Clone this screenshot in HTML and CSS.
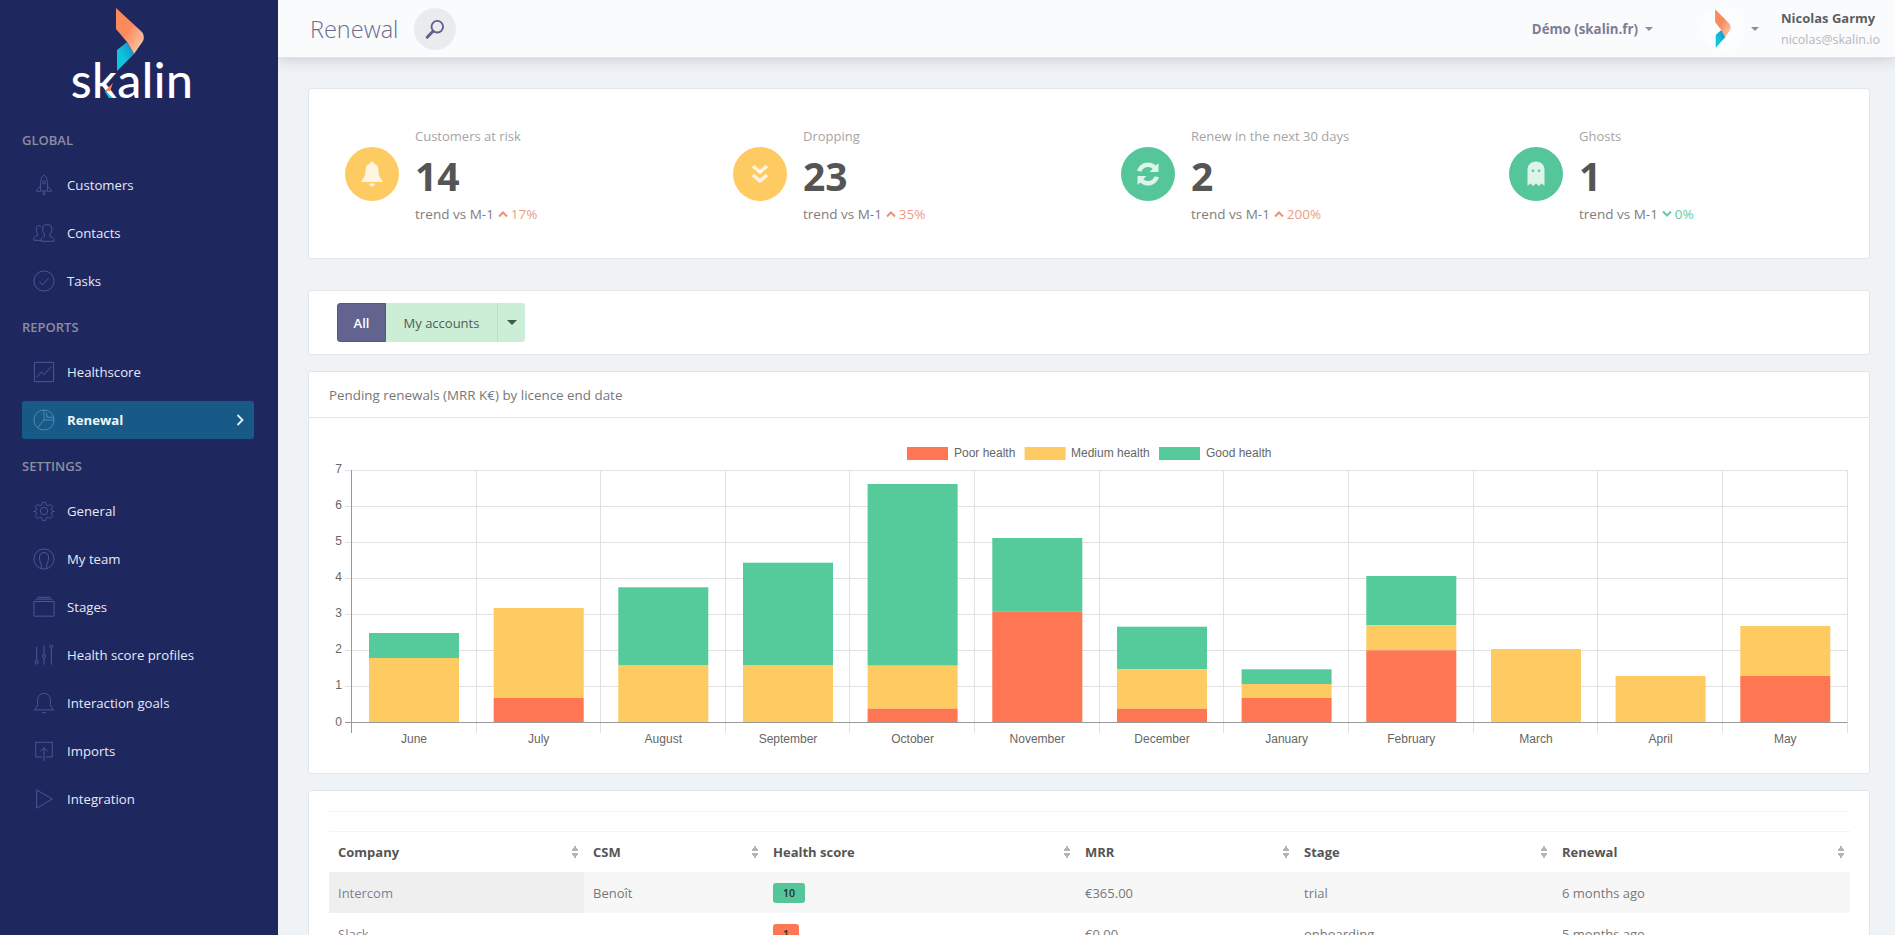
FILE: index.html
```html
<!DOCTYPE html>
<html lang="en">
<head>
<meta charset="utf-8">
<title>Renewal</title>
<link rel="stylesheet" href="styles.css">
</head>
<body>
<div class="app">
  <aside class="sidebar">
    <div class="logo">
      <div class="logo-word">skalin</div>
      <svg class="logo-mark" viewBox="100 0 60 100" width="60" height="100">
        <defs>
          <linearGradient id="lgO" x1="0" y1="0" x2="1" y2="1"><stop offset="0.45" stop-color="#f98a5c"/><stop offset="1" stop-color="#fcd3bb"/></linearGradient>
          <linearGradient id="lgB" x1="0" y1="1" x2="1" y2="0"><stop offset="0.4" stop-color="#0fc4de"/><stop offset="1" stop-color="#1d83c4"/></linearGradient>
        </defs>
        <path d="M116 8 L142 32 Q145 36 143 41 L134 54 L127 42 L116 29Z" fill="url(#lgO)"/>
        <path d="M127 42 L134 54 L117 71 L117 50Z" fill="url(#lgB)"/>
        <path d="M113 83 L105 91 L110 91Z" fill="#f98a5c"/>
        <path d="M105 91 L113 98 L109 98 L105 92Z" fill="#0fc4de"/>
      </svg>
    </div>

    <div class="nav-title">GLOBAL</div>
    <a class="nav-item"><svg class="nav-icon" viewBox="0 0 24 26"><path d="M12 1c3 2.500 4 5.500 4 9v10H8V10c0-3.500 1-6.500 4-9zM8 14l-4.500 5v1.500H8M16 14l4.500 5v1.500H16M11 20.500v3l1 1.500 1-1.500v-3"/><circle cx="12" cy="10" r="1.700"/></svg><span>Customers</span></a>
    <a class="nav-item"><svg class="nav-icon" viewBox="0 0 24 24"><path d="M9 20H1v-2c0-2 3-2.500 4-3.500v-2C3.500 11 3.500 9 3.500 7.500 3.500 5 5 4 6.500 4c1.200 0 2.200.5 2.800 1.500M9 21h14v-2c0-2-3.500-2.500-4.500-3.500v-2.500c1.500-1.500 2-3 2-5.500C20.500 4.500 19 3 16.500 3h-2C12 3 10.500 4.500 10.500 7.500c0 2.500.5 4 2 5.500v2.500C11.500 16.500 9 17 9 19z"/></svg><span>Contacts</span></a>
    <a class="nav-item"><svg class="nav-icon" viewBox="0 0 24 24"><circle cx="12" cy="12" r="11"/><path d="M7 13l3.500 3L17 9"/></svg><span>Tasks</span></a>

    <div class="nav-title">REPORTS</div>
    <a class="nav-item"><svg class="nav-icon" viewBox="0 0 24 24"><path d="M1.500 1.500h21v21h-21zM4 18l5-6 3 3 8-9"/></svg><span>Healthscore</span></a>
    <a class="nav-item active"><svg class="nav-icon" viewBox="0 0 24 24"><circle cx="12" cy="12" r="11"/><path d="M12 1V12l-7 8.500M12 12h11M15 4v5h7.500"/></svg><span>Renewal</span><svg class="nav-chevron" viewBox="0 0 10 14"><path d="M2.500 2l5 5-5 5"/></svg></a>

    <div class="nav-title">SETTINGS</div>
    <a class="nav-item"><svg class="nav-icon" viewBox="0 0 24 24"><circle cx="12" cy="12" r="4"/><path d="M10 1.500h4l.7 3.200 2.200 1 2.800-1.700 2.800 2.800-1.700 2.800.9 2.200 2.800.7v0l-2.800.7-.9 2.200 1.700 2.800-2.800 2.800-2.800-1.700-2.200 1-.7 3.200h-4l-.7-3.200-2.200-1-2.800 1.700-2.800-2.800 1.700-2.800-.9-2.200-2.800-.7v0l2.800-.7.900-2.200-1.700-2.800 2.800-2.800 2.800 1.700 2.200-1z" transform="translate(1.200 1.200) scale(.9)"/></svg><span>General</span></a>
    <a class="nav-item"><svg class="nav-icon" viewBox="0 0 24 24"><circle cx="12" cy="12" r="11"/><path d="M9 22.500v-5C7.500 15 7 13 7 10.500 7 7 9 5 12 5s5 2 5 5.500c0 2.500-.5 4.500-2 7v5"/></svg><span>My team</span></a>
    <a class="nav-item"><svg class="nav-icon wide" viewBox="0 0 24 24"><path d="M1 6h22v16H1zM3 3.500h18M5 1.500h14"/></svg><span>Stages</span></a>
    <a class="nav-item"><svg class="nav-icon" viewBox="0 0 24 24"><path d="M4 3v15M4 21.500v1M12 1.500v10M12 15v7.500M20 5v17.500"/><circle cx="4" cy="19.800" r="1.700"/><circle cx="12" cy="13.200" r="1.700"/><circle cx="20" cy="3" r="1.700"/></svg><span>Health score profiles</span></a>
    <a class="nav-item"><svg class="nav-icon" viewBox="0 0 24 24"><path d="M12 1.500c-4.500 0-7 3.500-7 8v4c0 2.500-2 4.500-3.500 6h21c-1.500-1.500-3.500-3.500-3.500-6v-4c0-4.500-2.500-8-7-8zM10 22.500h4"/></svg><span>Interaction goals</span></a>
    <a class="nav-item"><svg class="nav-icon" viewBox="0 0 24 24"><path d="M10 18.500H3v-16h18v16h-7M12 8.500V23M8 12.500l4-4 4 4"/></svg><span>Imports</span></a>
    <a class="nav-item"><svg class="nav-icon" viewBox="0 0 24 24"><path d="M4 2l17 10L4 22z"/></svg><span>Integration</span></a>
  </aside>

  <div class="main">
    <header class="topbar">
      <h1 class="page-title">Renewal</h1>
      <button class="search-btn" aria-label="Search">
        <svg viewBox="0 0 24 24" width="22" height="22"><circle cx="14.500" cy="9.500" r="6.300" class="search-ring"/><path d="M9.800 14.500L3.500 21" class="search-handle"/></svg>
      </button>
      <div class="topbar-spacer"></div>
      <div class="org">Démo (skalin.fr)<span class="caret"></span></div>
      <div class="avatar">
        <svg viewBox="114 6 32 67" width="18" height="41" preserveAspectRatio="none">
          <path d="M116 8 L142 32 Q145 36 143 41 L134 54 L127 42 L116 29Z" fill="url(#lgO)"/>
          <path d="M127 42 L134 54 L117 71 L117 50Z" fill="url(#lgB)"/>
        </svg>
      </div>
      <span class="caret user-caret"></span>
      <div class="user">
        <div class="user-name">Nicolas Garmy</div>
        <div class="user-mail">nicolas@skalin.io</div>
      </div>
    </header>

    <div class="content">
      <section class="card stats">
        <div class="stat">
          <div class="stat-icon warn"><svg viewBox="0 0 24 28" width="24" height="28"><path d="M12 1.500c-1 0-1.700.7-1.700 1.700C7 4 5.500 7 5.500 10.500c0 5-1.500 7.500-4 10v1.500h21v-1.500c-2.500-2.500-4-5-4-10 0-3.500-1.500-6.500-4.800-7.300 0-1-.7-1.700-1.700-1.700z"/><path d="M9 23.500h6c0 1.500-1.500 3-3 3s-3-1.500-3-3z"/></svg></div>
          <div class="stat-body">
            <div class="stat-label">Customers at risk</div>
            <div class="stat-value">14</div>
            <div class="stat-trend">trend vs M-1<svg class="trend-arrow up" viewBox="0 0 10 8"><path d="M1 6.500l4-4 4 4"/></svg><span class="trend-up">17%</span></div>
          </div>
        </div>
        <div class="stat">
          <div class="stat-icon warn"><svg viewBox="0 0 24 24" width="24" height="24"><path class="chev" d="M5 4l7 6 7-6M5 13l7 6 7-6"/></svg></div>
          <div class="stat-body">
            <div class="stat-label">Dropping</div>
            <div class="stat-value">23</div>
            <div class="stat-trend">trend vs M-1<svg class="trend-arrow up" viewBox="0 0 10 8"><path d="M1 6.500l4-4 4 4"/></svg><span class="trend-up">35%</span></div>
          </div>
        </div>
        <div class="stat">
          <div class="stat-icon good"><svg viewBox="0 0 28 28" width="28" height="28"><path d="M14 2.500c3 0 5.800 1.200 7.800 3.100L24.500 3v9h-9l3.200-3.200C17.500 7.700 15.800 7 14 7c-3 0-5.600 1.800-6.600 4.700L3 10.800C4.500 6 8.900 2.500 14 2.500zM3.500 16h9l-3.200 3.200c1.200 1.100 2.900 1.800 4.700 1.800 3 0 5.600-1.800 6.600-4.700l4.400.9C23.500 22 19.100 25.500 14 25.500c-3 0-5.800-1.200-7.800-3.100L3.500 25z"/></svg></div>
          <div class="stat-body">
            <div class="stat-label">Renew in the next 30 days</div>
            <div class="stat-value">2</div>
            <div class="stat-trend">trend vs M-1<svg class="trend-arrow up" viewBox="0 0 10 8"><path d="M1 6.500l4-4 4 4"/></svg><span class="trend-up">200%</span></div>
          </div>
        </div>
        <div class="stat">
          <div class="stat-icon good"><svg viewBox="0 0 24 28" width="24" height="28"><path fill-rule="evenodd" d="M12 1.500c-5 0-8.500 3.500-8.500 8.500v16l2.800-2.500 2.900 2.500 2.800-2.500 2.800 2.500 2.900-2.500 2.800 2.500V10c0-5-3.500-8.500-8.500-8.500zM9 9.500a1.300 1.300 0 1 1 0 2.600 1.300 1.300 0 0 1 0-2.600zm6 0a1.300 1.300 0 1 1 0 2.600 1.300 1.300 0 0 1 0-2.600z"/></svg></div>
          <div class="stat-body">
            <div class="stat-label">Ghosts</div>
            <div class="stat-value">1</div>
            <div class="stat-trend">trend vs M-1<svg class="trend-arrow down" viewBox="0 0 10 8"><path d="M1 1.500l4 4 4-4"/></svg><span class="trend-down">0%</span></div>
          </div>
        </div>
      </section>

      <section class="card filters">
        <div class="btn-group">
          <button class="btn btn-all">All</button>
          <button class="btn btn-mine">My accounts</button>
          <button class="btn btn-drop"><span class="caret dark"></span></button>
        </div>
      </section>

      <section class="card chart-card">
        <div class="card-head">Pending renewals (MRR K€) by licence end date</div>
        <svg class="chart" viewBox="309 418 1561 354" width="1561" height="354">
          <g class="grid">
            <path d="M345 470.500H1847.500M345 506.500H1847.500M345 542.500H1847.500M345 578.500H1847.500M345 614.500H1847.500M345 650.500H1847.500M345 686.500H1847.500"/>
            <path d="M476.500 470V733M600.500 470V733M725.500 470V733M849.500 470V733M974.500 470V733M1099.500 470V733M1223.500 470V733M1348.500 470V733M1473.500 470V733M1597.500 470V733M1722.500 470V733M1847.500 470V733"/>
          </g>
          <g class="bar-good">
            <rect x="369" y="633" width="90" height="25"/><rect x="618.300" y="587.300" width="90" height="77.700"/><rect x="743" y="562.700" width="90" height="102.300"/><rect x="867.600" y="484" width="90" height="181.700"/><rect x="992.300" y="538" width="90" height="73.300"/><rect x="1117" y="626.700" width="90" height="42.600"/><rect x="1241.600" y="669.300" width="90" height="14.700"/><rect x="1366.300" y="576" width="90" height="49.300"/>
          </g>
          <g class="bar-medium">
            <rect x="369" y="658" width="90" height="64.700"/><rect x="493.700" y="608" width="90" height="90"/><rect x="618.300" y="665" width="90" height="57.700"/><rect x="743" y="665" width="90" height="57.700"/><rect x="867.600" y="665.700" width="90" height="43"/><rect x="1117" y="669.300" width="90" height="39.400"/><rect x="1241.600" y="684" width="90" height="14"/><rect x="1366.300" y="625.300" width="90" height="25"/><rect x="1491" y="649" width="90" height="73.700"/><rect x="1615.600" y="676" width="90" height="46.700"/><rect x="1740.300" y="626" width="90" height="50"/>
          </g>
          <g class="bar-poor">
            <rect x="493.700" y="698" width="90" height="24.700"/><rect x="867.600" y="708.700" width="90" height="14"/><rect x="992.300" y="611.300" width="90" height="111.400"/><rect x="1117" y="708.700" width="90" height="14"/><rect x="1241.600" y="698" width="90" height="24.700"/><rect x="1366.300" y="650.300" width="90" height="72.400"/><rect x="1740.300" y="676" width="90" height="46.700"/>
          </g>
          <path class="axis" d="M345 722.500H1847.500M351.500 470V733"/>
          <g class="bar-poor"><rect x="907" y="447" width="41" height="13"/></g>
          <g class="bar-medium"><rect x="1024.600" y="447" width="41" height="13"/></g>
          <g class="bar-good"><rect x="1159" y="447" width="41" height="13"/></g>
          <g class="chart-text">
            <text x="954" y="457">Poor health</text><text x="1071" y="457">Medium health</text><text x="1206" y="457">Good health</text>
          </g>
          <g class="chart-text end">
            <text x="342" y="473">7</text><text x="342" y="509">6</text><text x="342" y="545">5</text><text x="342" y="581">4</text><text x="342" y="617">3</text><text x="342" y="653">2</text><text x="342" y="689">1</text><text x="342" y="726">0</text>
          </g>
          <g class="chart-text middle">
            <text x="414" y="743">June</text><text x="538.700" y="743">July</text><text x="663.300" y="743">August</text><text x="788" y="743">September</text><text x="912.600" y="743">October</text><text x="1037.300" y="743">November</text><text x="1162" y="743">December</text><text x="1286.600" y="743">January</text><text x="1411.300" y="743">February</text><text x="1536" y="743">March</text><text x="1660.600" y="743">April</text><text x="1785.300" y="743">May</text>
          </g>
        </svg>
      </section>

      <section class="card table-card">
        <div class="table-toolbar"></div>
        <table class="data-table">
          <colgroup><col class="c1"><col class="c2"><col class="c3"><col class="c4"><col class="c5"><col class="c6"></colgroup>
          <thead>
            <tr>
              <th><div class="th-in">Company<span class="sort"></span></div></th>
              <th><div class="th-in">CSM<span class="sort"></span></div></th>
              <th><div class="th-in">Health score<span class="sort"></span></div></th>
              <th><div class="th-in">MRR<span class="sort"></span></div></th>
              <th><div class="th-in">Stage<span class="sort"></span></div></th>
              <th><div class="th-in">Renewal<span class="sort"></span></div></th>
            </tr>
          </thead>
          <tbody>
            <tr class="odd">
              <td class="company sorted">Intercom</td><td>Benoît</td><td><span class="badge badge-good">10</span></td><td>€365.00</td><td>trial</td><td>6 months ago</td>
            </tr>
            <tr>
              <td class="company">Slack</td><td>-</td><td><span class="badge badge-poor">1</span></td><td>€0.00</td><td>onboarding</td><td>5 months ago</td>
            </tr>
          </tbody>
        </table>
      </section>
    </div>
  </div>
</div>
</body>
</html>
```

FILE: styles.css
```css
* { box-sizing: border-box; }
html, body { height: 100%; }
body {
  margin: 0;
  overflow: hidden;
  background: #f0f3f6;
  font-family: "Open Sans", "Noto Sans", sans-serif;
  font-size: 13px;
  color: #777;
}
.app { display: flex; height: 935px; }

/* Sidebar */
.sidebar {
  width: 278px;
  flex: none;
  background: #1f275f;
  padding: 0 24px 0 22px;
}
.logo {
  height: 118px;
  position: relative;
  margin-left: -22px;
  margin-right: -24px;
}
.logo-mark { position: absolute; left: 100px; top: 0; }
.logo-word {
  position: absolute;
  left: 70px;
  top: 49px;
  width: 124px;
  text-align: center;
  font-family: "Lato", sans-serif;
  font-size: 48px;
  line-height: 62px;
  font-weight: 500;
  color: #fff;
  letter-spacing: .5px;
}
.nav-title {
  height: 43px;
  display: flex;
  align-items: center;
  font-size: 13px;
  font-weight: 600;
  color: #8b8e9f;
}
.nav-item {
  height: 48px;
  display: flex;
  align-items: center;
  padding-left: 11px;
  color: #e6e9f6;
  font-size: 13.200px;
}
.nav-icon {
  width: 22px;
  height: 22px;
  flex: none;
  margin-right: 12px;
  fill: none;
  stroke: #4f5896;
  stroke-width: 1.05;
  overflow: visible;
}
.nav-icon.wide { width: 24px; margin-left: -1px; margin-right: 11px; }
.nav-item.active {
  height: 38px;
  margin: 5px 0;
  background: #175a87;
  border-radius: 3px;
  color: #f1f6fb;
  font-weight: 700;
  position: relative;
}
.nav-item.active .nav-icon { stroke: #4f8bb5; }
.nav-chevron {
  width: 10px;
  height: 14px;
  margin-left: auto;
  margin-right: 9px;
  fill: none;
  stroke: #e6eff7;
  stroke-width: 1.8;
}

/* Main */
.main { flex: 1; min-width: 0; display: flex; flex-direction: column; }
.topbar {
  height: 58px;
  flex: none;
  background: #fafbfd;
  box-shadow: 0 1px 14px rgba(40, 50, 70, .22);
  border-bottom: 1px solid #dfe2e6;
  display: flex;
  align-items: center;
  padding: 0 15px 0 32px;
  position: relative;
}
.page-title {
  margin: 0;
  font-size: 23.500px;
  font-weight: 300;
  color: #6a6d8c;
  line-height: 58px;
}
.search-btn {
  width: 42px;
  height: 42px;
  margin-left: 16px;
  border: 0;
  border-radius: 50%;
  background: #e9ebef;
  display: flex;
  align-items: center;
  justify-content: center;
  padding: 0;
}
.search-ring { fill: none; stroke: #5f5e8d; stroke-width: 2; }
.search-handle { fill: none; stroke: #5f5e8d; stroke-width: 3.2; stroke-linecap: round; }
.topbar-spacer { flex: 1; }
.org {
  font-size: 13.300px;
  font-weight: 700;
  color: #7b7e96;
  display: flex;
  align-items: center;
}
.caret {
  display: inline-block;
  width: 0;
  height: 0;
  border-left: 4px solid transparent;
  border-right: 4px solid transparent;
  border-top: 4px solid #8b8e9c;
  margin-left: 7px;
}
.caret.dark { border-left-width: 5px; border-right-width: 5px; border-top: 5px solid #3f5a48; margin: 0; }
.avatar {
  width: 44px;
  height: 44px;
  margin-left: 48px;
  border-radius: 50%;
  background: #fcfdfe;
  display: flex;
  align-items: center;
  justify-content: center;
}
.user-caret { margin-left: 6px; margin-right: 22px; }
.user { line-height: 21px; }
.user-name { font-weight: 700; color: #5d5f63; font-size: 13px; }
.user-mail { color: #b5b7ba; font-size: 12.500px; }

.content { flex: 1; overflow: hidden; padding: 30px 25px 0 30px; }
.card {
  background: #fff;
  border: 1px solid #e3e6e9;
  border-radius: 3px;
}

/* Stats */
.stats {
  height: 171px;
  display: grid;
  grid-template-columns: repeat(4, 388px);
  align-items: center;
  padding-left: 36px;
  margin-bottom: 31px;
}
.stat { display: flex; align-items: center; }
.stat-icon {
  width: 54px;
  height: 54px;
  border-radius: 50%;
  flex: none;
  margin-right: 16px;
  display: flex;
  align-items: center;
  justify-content: center;
  fill: rgba(255, 255, 255, .8);
}
.warn { background: #fecb63; }
.good { background: #55c59a; }
.chev { fill: none; stroke: rgba(255, 255, 255, .8); stroke-width: 3.6; }
.stat-body { height: 110px; padding-top: 7px; }
.stat-label { height: 20px; line-height: 20px; margin-bottom: 2px; color: #a5a5a5; font-size: 13px; }
.stat-value {
  height: 55px;
  line-height: 55px;
  font-size: 39px;
  font-weight: 700;
  color: #555;
}
.stat-trend { height: 22px; font-size: 13.500px; color: #7d7d7d; display: flex; align-items: center; }
.trend-arrow { width: 10px; height: 8px; margin: 0 3px 0 4px; fill: none; stroke-width: 2; }
.trend-arrow.up { stroke: #ee9172; }
.trend-arrow.down { stroke: #6cc9a4; }
.trend-up { color: #ee9c84; }
.trend-down { color: #6cc9a4; }

/* Filters */
.filters {
  height: 65px;
  padding: 12px 0 0 28px;
  margin-bottom: 16px;
}
.btn-group { display: flex; height: 39px; }
.btn {
  border: 0;
  margin: 0;
  height: 39px;
  font: inherit;
  padding: 0;
}
.btn-all {
  width: 49px;
  background: #62648f;
  border: 1px solid #565880;
  color: #fff;
  font-weight: 600;
  border-radius: 3px 0 0 3px;
}
.btn-mine {
  width: 112px;
  background: #cdeed6;
  color: #4c5d52;
  border-right: 1px solid #bfdcc8;
}
.btn-drop {
  width: 27px;
  background: #cdeed6;
  border-radius: 0 3px 3px 0;
  display: flex;
  align-items: center;
  justify-content: center;
}

/* Chart */
.chart-card { height: 403px; margin-bottom: 16px; }
.card-head {
  height: 46px;
  line-height: 47px;
  padding-left: 20px;
  border-bottom: 1px solid #e3e6e9;
  color: #777;
  font-size: 13.400px;
}
.chart { display: block; }
.grid path { stroke: #e1e1e1; fill: none; stroke-width: 1; }
.axis { stroke: #9a9a9a; stroke-width: 1; fill: none; }
.bar-good { fill: #55cb9b; }
.bar-medium { fill: #fecb63; }
.bar-poor { fill: #ff7752; }
.chart-text {
  font-family: "Liberation Sans", Arial, sans-serif;
  font-size: 12px;
  fill: #666;
}
.chart-text.end { text-anchor: end; }
.chart-text.middle { text-anchor: middle; }

/* Table */
.table-card { padding: 20px 20px 0; }
.table-toolbar { height: 20px; border-top: 1px solid #f4f4f4; }
.data-table {
  width: 1521px;
  table-layout: fixed;
  border-collapse: collapse;
  border-top: 1px solid #f4f4f4;
}
.c1 { width: 255px; }
.c2 { width: 180px; }
.c3 { width: 312px; }
.c4 { width: 219px; }
.c5 { width: 258px; }
.c6 { width: 297px; }
.data-table th {
  height: 40px;
  padding: 0 5px 0 9px;
  text-align: left;
  font-size: 13px;
  font-weight: 700;
  color: #555;
}
.th-in { display: flex; align-items: center; justify-content: space-between; }
.sort {
  width: 8px;
  height: 14px;
  flex: none;
  background:
    conic-gradient(from 150deg at 50% 0, #b3b5b9 60deg, transparent 0) top / 8px 6px no-repeat,
    conic-gradient(from -30deg at 50% 100%, #b3b5b9 60deg, transparent 0) bottom / 8px 6px no-repeat;
}
.data-table td { height: 41px; padding: 1px 9px 0; color: #777; font-size: 13px; }
.odd td { background: #f7f7f7; }
.odd td.sorted { background: #efefef; }
.company { color: #7d7f95 !important; }
.badge {
  display: inline-block;
  height: 20px;
  line-height: 20px;
  padding: 0 10px;
  border-radius: 3px;
  font-size: 10.500px;
  font-weight: 600;
  color: #24332c;
  vertical-align: middle;
}
.badge-good { background: #55c59a; }
.badge-poor { background: #ff7752; }
```
